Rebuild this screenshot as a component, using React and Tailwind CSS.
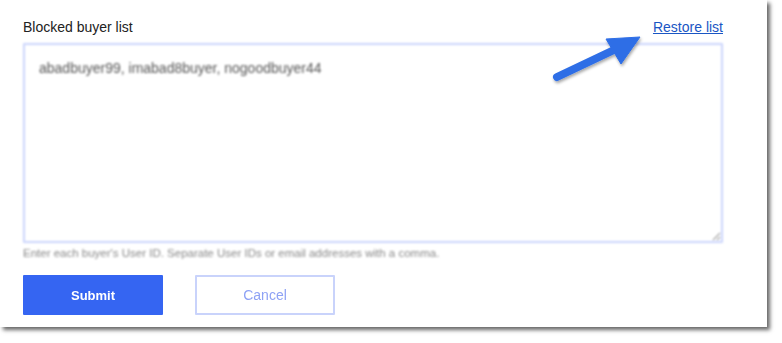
import { useState } from 'react';

export default function App() {
  const [list,setList]=useState('abadbuyer99, imabad8buyer, nogoodbuyer44');
  return (
    <div className="w-[782px] h-[343px] bg-white font-['Liberation_Sans',Arial,sans-serif]">
      <div className="relative w-[767px] h-[327px] bg-white shadow-[3px_3px_4px_rgba(0,0,0,0.6)] pl-[23px] pt-[20px]">
        <div className="w-[700px] flex items-end justify-between h-[18px]">
          <span className="text-[14px] text-[#222]">Blocked buyer list</span>
          <a href="#" className="text-[14px] text-[#1a56c4] underline">Restore list</a>
        </div>
        <textarea value={list} onChange={e=>setList(e.target.value)}
          className="mt-[5px] block w-[700px] h-[200px] border-2 border-[#cbd5fc] rounded-[1px] px-[14px] pt-[13px] text-[14px] text-[#555] blur-[0.8px] outline-none resize-y"/>
        <p className="mt-[2px] text-[11.5px] text-[#888] blur-[0.8px]">Enter each buyer's User ID. Separate User IDs or email addresses with a comma.</p>
        <div className="mt-[13px] flex gap-[32px]">
          <button className="w-[140px] h-[40px] bg-[#3565f2] text-white text-[13px] font-bold rounded-[1px]"><span className="blur-[0.7px]">Submit</span></button>
          <button className="w-[140px] h-[40px] border-2 border-[#c9d3fb] text-[#8ea2f5] text-[14px] rounded-[1px]"><span className="blur-[0.7px]">Cancel</span></button>
        </div>
        <svg className="absolute left-[545px] top-[28px]" width="110" height="60" viewBox="545 28 110 60">
          <defs>
            <filter id="sh" x="-20%" y="-20%" width="140%" height="160%">
              <feDropShadow dx="1" dy="2" stdDeviation="1.5" floodColor="#000" floodOpacity="0.35"/>
            </filter>
          </defs>
          <g filter="url(#sh)" fill="#2e6ee6" stroke="#2e6ee6">
            <line x1="557" y1="77" x2="616" y2="49" strokeWidth="8" strokeLinecap="round"/>
            <polygon points="640,37 606,39 621,64" strokeWidth="1" strokeLinejoin="round"/>
          </g>
        </svg>
      </div>
    </div>
  );
}
